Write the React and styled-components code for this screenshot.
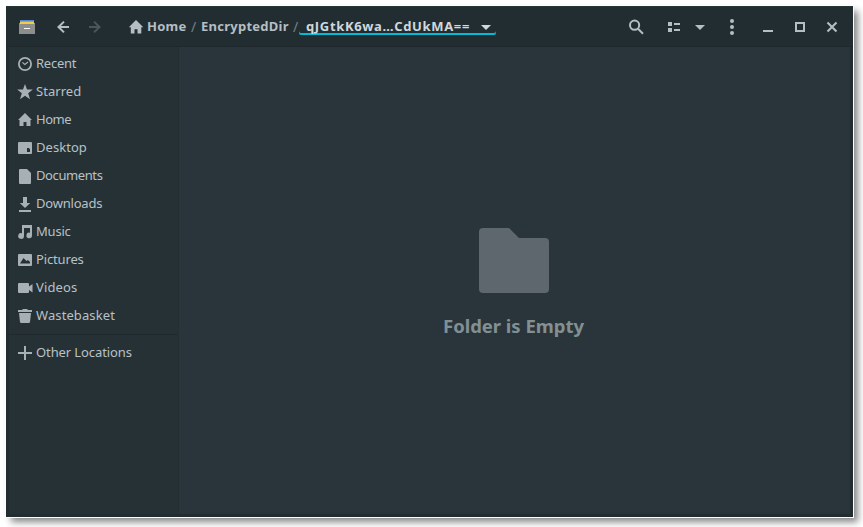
import React from "react";
import styled, { createGlobalStyle } from "styled-components";

const GlobalStyle = createGlobalStyle`
  * { box-sizing: border-box; }
  html, body { margin: 0; background: #fff; overflow: hidden; }
`;

const Page = styled.div`
  width: 863px;
  height: 527px;
  padding: 6px 0 0 6px;
  background: #fff;
  font-family: "Noto Sans", "Open Sans", sans-serif;
`;

const Window = styled.div`
  display: flex;
  flex-direction: column;
  width: 847px;
  height: 511px;
  background: #222d32;
  box-shadow: 0 0 0 1px #fdfdfd, 5px 5px 7px rgba(0, 0, 0, 0.48);
`;

const HeaderBar = styled.header`
  display: flex;
  align-items: center;
  height: 41px;
  border-top: 1px solid #26352f;
  border-bottom: 1px solid #1e282d;
  color: #b5bec3;
`;

const HeaderIcon = styled.span`
  display: flex;
  flex: none;
  width: ${(p) => p.$w || 16}px;
  margin-left: ${(p) => p.$gap}px;
  opacity: ${(p) => (p.$dim ? 0.28 : 1)};
`;

const Svg = styled.svg`
  display: block;
  flex: none;
  fill: currentColor;
`;

const PathBar = styled.nav`
  display: flex;
  align-items: center;
  height: 40px;
  width: 368px;
  margin-left: 25px;
`;

const Crumb = styled.span`
  flex: none;
  width: ${(p) => p.$w}px;
  margin-left: ${(p) => p.$gap}px;
  padding-bottom: 2px;
  font-size: 13px;
  line-height: 18px;
  font-weight: 700;
  letter-spacing: ${(p) => p.$track || 0}px;
  white-space: nowrap;
  color: ${(p) => (p.$active ? "#cfd8dc" : "#b5bec3")};
`;

const Slash = styled.span`
  flex: none;
  width: 6px;
  margin-left: ${(p) => p.$gap}px;
  font-size: 14px;
  line-height: 18px;
  color: #778185;
`;

const CurrentCrumb = styled.div`
  display: flex;
  align-items: center;
  flex: none;
  width: 197px;
  height: 16px;
  box-shadow: 0 -2px 0 #00bcd4 inset;
  border-radius: 0 0 2px 2px;
  color: #cfd8dc;
`;

const Body = styled.div`
  display: flex;
  flex: 1;
  min-height: 0;
  padding: 0 3px 3px;
`;

const Sidebar = styled.aside`
  width: 170px;
  padding-top: 3px;
  background: #263136;
  border-right: 1px solid #232d32;
`;

const Place = styled.div`
  display: flex;
  align-items: center;
  height: 28px;
  padding-left: 8px;
  color: #a7b0b5;
`;

const PlaceLabel = styled.span`
  margin-left: 3px;
  padding-bottom: 2px;
  font-size: 13px;
  line-height: 18px;
  letter-spacing: ${(p) => p.$track || 0}px;
  white-space: nowrap;
  color: #b8c1c6;
`;

const Separator = styled.div`
  height: 1px;
  margin: 4px 0;
  background: #1f292e;
`;

const Content = styled.main`
  display: flex;
  flex-direction: column;
  align-items: center;
  flex: 1;
  padding: 181px 2px 0 0;
  background: #2a353b;
`;

const EmptyTitle = styled.h1`
  margin: 19px 0 0;
  font-size: 18.5px;
  line-height: 28px;
  font-weight: 700;
  letter-spacing: -0.03px;
  white-space: nowrap;
  color: #829093;
`;

const icons = {
  recent: (
    <>
      <circle cx="8" cy="8" r="6.1" fill="none" stroke="currentColor" strokeWidth="1.8" />
      <path d="M5.4 6.4l2.4 2.1L11 6" fill="none" stroke="currentColor" strokeWidth="1.2" />
    </>
  ),
  star: <path d="M8 0l2 5.6h5.8l-4.6 3.6 1.8 6.1L8 11.8l-5 3.5 1.8-6.1L.2 5.6H6z" />,
  home: <path d="M8 1L1 8h1.5v6H6.5v-4h3v4h4V8H15z" />,
  homeLarge: <path d="M8 1L.8 8.2h2V14.5h3.7v-4.3h3v4.3h3.8V8.2h2z" />,
  desktop: <path fillRule="evenodd" d="M2 2h12q1 0 1 1v10q0 1-1 1H2q-1 0-1-1V3q0-1 1-1zM10 8v4h3V9.3L11.8 8z" />,
  document: <path d="M3 1h7l4 4v10q0 1-1 1H3q-1 0-1-1V2q0-1 1-1z" />,
  download: <path d="M6 1h4v6h3.2L8 12 2.8 7H6zM2 14h12v2H2z" />,
  music: <path d="M5 1h10v10.5a2.8 2.8 0 1 1-2-2.7V4H7v8a2.9 2.9 0 1 1-2-2.8z" />,
  picture: <path fillRule="evenodd" d="M2 2h12q1 0 1 1v10q0 1-1 1H2q-1 0-1-1V3q0-1 1-1zM3 11.5h10V10l-2-2-1.5 1L6.5 6z" />,
  video: <path d="M2 3h9q1 0 1 1v2.5L15.5 4v8.5L12 10v2q0 1-1 1H2q-1 0-1-1V4q0-1 1-1z" />,
  trash: <path d="M1 2h4l1-1h4l1 1h4v2H1zM2 5h12l-1 9q-.2 1-1.2 1H4.2q-1 0-1.2-1z" />,
  plus: <path d="M7 1h2v6h6v2H9v6H7V9H1V7h6z" />,
  back: <path d="M14 7v2H6l3.7 3.7L8.3 14 2 8l6.3-6 1.4 1.3L6 7z" />,
  forward: <path d="M2 7v2h8l-3.7 3.7L7.7 14 14 8 7.7 2 6.3 3.3 10 7z" />,
  search: (
    <g fill="none" stroke="currentColor" strokeWidth="2">
      <circle cx="6.6" cy="6.2" r="4.6" />
      <path d="M10 9.8l5 5" />
    </g>
  ),
  list: <path d="M2 3h4v4H2zM2 9h4v4H2zM8 4h6v2H8zM8 10h6v2H8z" />,
  caret: <path d="M3 6h10l-5 5z" />,
  menu: (
    <>
      <circle cx="8" cy="2" r="2" />
      <circle cx="8" cy="8" r="2" />
      <circle cx="8" cy="14" r="2" />
    </>
  ),
  minimize: <path d="M3 11h10v2H3z" />,
  maximize: <path fillRule="evenodd" d="M3 3h10v10H3zM5 5v6h6V5z" />,
  close: <path d="M3.5 3.5l9 9M12.5 3.5l-9 9" stroke="currentColor" strokeWidth="2.1" />,
};

function Icon({ name }) {
  return (
    <Svg width="16" height="16" viewBox="0 0 16 16">
      {icons[name]}
    </Svg>
  );
}

function AppIcon() {
  return (
    <Svg width="16" height="16" viewBox="0 0 16 16">
      <path d="M1 1h14v1H1z" fill="#5388cf" />
      <path d="M1 2h14v1H1z" fill="#62b5d0" />
      <path d="M1 3h14v2H1z" fill="#f4cc43" />
      <path d="M0 4h1v1h14V4h1v11H0z" fill="#8d8d8b" />
      <path d="M5 9h6v1H5z" fill="#fff" />
    </Svg>
  );
}

const places = [
  ["recent", "Recent", -0.25],
  ["star", "Starred", 0.05],
  ["home", "Home", -0.45],
  ["desktop", "Desktop", 0.05],
  ["document", "Documents", -0.4],
  ["download", "Downloads", -0.2],
  ["music", "Music", -0.2],
  ["picture", "Pictures", -0.15],
  ["video", "Videos", 0.15],
  ["trash", "Wastebasket", 0.1],
];

export default function App() {
  return (
    <Page>
      <GlobalStyle />
      <Window>
        <HeaderBar>
          <HeaderIcon $gap={13}><AppIcon /></HeaderIcon>
          <HeaderIcon $gap={20}><Icon name="back" /></HeaderIcon>
          <HeaderIcon $gap={16} $dim><Icon name="forward" /></HeaderIcon>
          <PathBar>
            <Icon name="homeLarge" />
            <Crumb $gap={3} $w={42} $track={0.25}>Home</Crumb>
            <Slash $gap={2}>/</Slash>
            <Crumb $gap={4} $w={92} $track={0.25}>EncryptedDir</Crumb>
            <Slash $gap={0}>/</Slash>
            <CurrentCrumb>
              <Crumb $gap={7} $w={164} $track={0.65} $active>qJGtkK6wa…CdUkMA==</Crumb>
              <HeaderIcon $gap={8}><Icon name="caret" /></HeaderIcon>
            </CurrentCrumb>
          </PathBar>
          <HeaderIcon $gap={132}><Icon name="search" /></HeaderIcon>
          <HeaderIcon $gap={22}><Icon name="list" /></HeaderIcon>
          <HeaderIcon $gap={10}><Icon name="caret" /></HeaderIcon>
          <HeaderIcon $gap={16}><Icon name="menu" /></HeaderIcon>
          <HeaderIcon $gap={20}><Icon name="minimize" /></HeaderIcon>
          <HeaderIcon $gap={16}><Icon name="maximize" /></HeaderIcon>
          <HeaderIcon $gap={16}><Icon name="close" /></HeaderIcon>
        </HeaderBar>
        <Body>
          <Sidebar>
            {places.map(([icon, label, track]) => (
              <Place key={label}>
                <Icon name={icon} />
                <PlaceLabel $track={track}>{label}</PlaceLabel>
              </Place>
            ))}
            <Separator />
            <Place>
              <Icon name="plus" />
              <PlaceLabel $track={-0.1}>Other Locations</PlaceLabel>
            </Place>
          </Sidebar>
          <Content>
            <Svg width="70" height="65" viewBox="0 0 70 65" color="#5f676e">
              <path d="M4 0h26l10 10h26q4 0 4 4v47q0 4-4 4H4q-4 0-4-4V4q0-4 4-4z" />
            </Svg>
            <EmptyTitle>Folder is Empty</EmptyTitle>
          </Content>
        </Body>
      </Window>
    </Page>
  );
}
